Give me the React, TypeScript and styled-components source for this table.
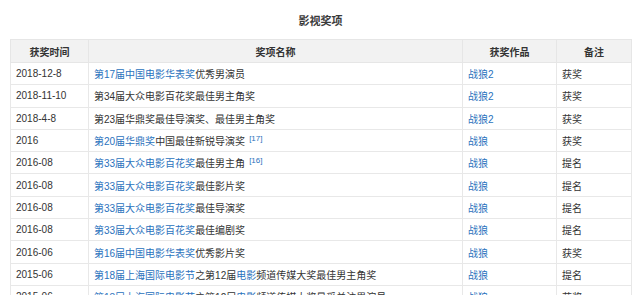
import React from "react";
import styled, { createGlobalStyle } from "styled-components";

const Global = createGlobalStyle`
  html, body { margin: 0; padding: 0; background: #fff; }
  body { font-family: "Liberation Sans", Arial, "Noto Sans CJK SC", sans-serif; color: #333; }
`;

const Page = styled.div`
  width: 640px;
  padding: 0 9px 0 10px;
  box-sizing: border-box;
`;

const Title = styled.div`
  height: 39px;
  display: flex;
  align-items: center;
  justify-content: center;
  font-size: 11px;
  font-weight: bold;
  color: #3a3a3a;
  padding-top: 1px;
  box-sizing: border-box;
`;

const Table = styled.table`
  width: 621px;
  border-collapse: collapse;
  table-layout: fixed;
  font-size: 10px;
`;

const Th = styled.th<{ $w: number }>`
  width: ${(p) => p.$w}px;
  height: 23px;
  padding: 0 5px;
  background: #f2f2f2;
  border: 1px solid #e6e6e6;
  font-weight: bold;
  color: #333;
  text-align: center;
  box-sizing: border-box;
`;

const Td = styled.td`
  height: 22.3px;
  padding: 0 5px;
  border: 1px solid #e8e8e8;
  color: #333;
  white-space: nowrap;
  overflow: hidden;
  box-sizing: border-box;
`;

const Link = styled.span`
  color: #2a72bd;
`;

const Sup = styled.sup`
  color: #2a72bd;
  font-size: 8px;
  margin-left: 4px;
  vertical-align: 4px;
  line-height: 0;
`;

type Part = { t: string; link?: boolean; sup?: boolean };

const rows: { date: string; name: Part[]; work: string; note: string }[] = [
  { date: "2018-12-8", name: [{ t: "第17届中国电影华表奖", link: true }, { t: "优秀男演员" }], work: "战狼2", note: "获奖" },
  { date: "2018-11-10", name: [{ t: "第34届大众电影百花奖最佳男主角奖" }], work: "战狼2", note: "获奖" },
  { date: "2018-4-8", name: [{ t: "第23届华鼎奖最佳导演奖、最佳男主角奖" }], work: "战狼2", note: "获奖" },
  { date: "2016", name: [{ t: "第20届华鼎奖", link: true }, { t: "中国最佳新锐导演奖" }, { t: "[17]", sup: true }], work: "战狼", note: "获奖" },
  { date: "2016-08", name: [{ t: "第33届大众电影百花奖", link: true }, { t: "最佳男主角" }, { t: "[16]", sup: true }], work: "战狼", note: "提名" },
  { date: "2016-08", name: [{ t: "第33届大众电影百花奖", link: true }, { t: "最佳影片奖" }], work: "战狼", note: "提名" },
  { date: "2016-08", name: [{ t: "第33届大众电影百花奖", link: true }, { t: "最佳导演奖" }], work: "战狼", note: "提名" },
  { date: "2016-08", name: [{ t: "第33届大众电影百花奖", link: true }, { t: "最佳编剧奖" }], work: "战狼", note: "提名" },
  { date: "2016-06", name: [{ t: "第16届中国电影华表奖", link: true }, { t: "优秀影片奖" }], work: "战狼", note: "获奖" },
  { date: "2015-06", name: [{ t: "第18届上海国际电影节", link: true }, { t: "之第12届" }, { t: "电影", link: true }, { t: "频道传媒大奖最佳男主角奖" }], work: "战狼", note: "提名" },
  { date: "2015-06", name: [{ t: "第18届上海国际电影节", link: true }, { t: "之第12届" }, { t: "电影", link: true }, { t: "频道传媒大奖最受关注男演员" }], work: "战狼", note: "获奖" },
];

export default function App() {
  return (
    <Page>
      <Global />
      <Title>影视奖项</Title>
      <Table>
        <thead>
          <tr>
            <Th $w={78}>获奖时间</Th>
            <Th $w={374}>奖项名称</Th>
            <Th $w={94}>获奖作品</Th>
            <Th $w={75}>备注</Th>
          </tr>
        </thead>
        <tbody>
          {rows.map((r, i) => (
            <tr key={i}>
              <Td>{r.date}</Td>
              <Td>
                {r.name.map((p, j) =>
                  p.sup ? <Sup key={j}>{p.t}</Sup> : p.link ? <Link key={j}>{p.t}</Link> : <span key={j}>{p.t}</span>
                )}
              </Td>
              <Td>
                <Link>{r.work}</Link>
              </Td>
              <Td>{r.note}</Td>
            </tr>
          ))}
        </tbody>
      </Table>
    </Page>
  );
}
